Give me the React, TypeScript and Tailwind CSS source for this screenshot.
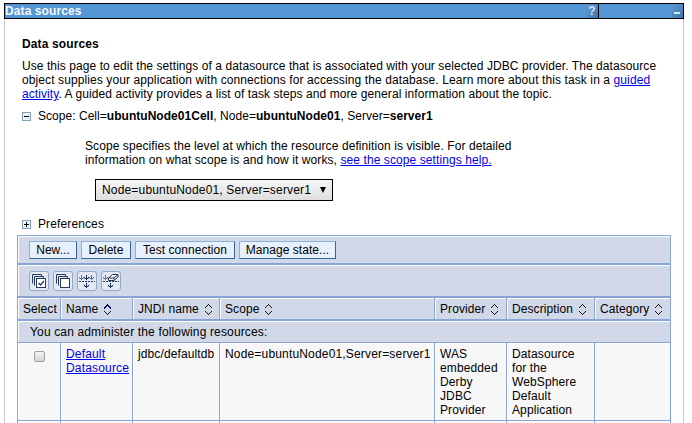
import React from "react";

const columns = [
  { name: "Name", sorted: true },
  { name: "JNDI name" },
  { name: "Scope" },
  { name: "Provider" },
  { name: "Description" },
  { name: "Category" },
];

const grid = "grid grid-cols-[43px_72px_87px_215px_72px_88px_76px]";
const cell = "border-l border-[#88a4d7]";
const inner = "border-t border-l border-white h-full";

function SortIcon({ sorted }: { sorted?: boolean }) {
  return (
    <svg width="7" height="11" viewBox="0 0 7 11" className="mt-[2px] shrink-0" fill="#111" shapeRendering="crispEdges">
      {sorted && <path d="M0 4h1v1h-1zM1 3h1v1h-1zM2 2h1v1h-1zM3 1h1v1h-1zM4 2h1v1h-1zM5 3h1v1h-1zM6 4h1v1h-1z" fill="#0000a0" />}
      <path d="M3 0h1v1h-1zM2 1h1v1h-1zM4 1h1v1h-1zM1 2h1v1h-1zM5 2h1v1h-1zM0 3h1v1h-1zM6 3h1v1h-1z" fill={sorted ? "#000040" : "#111"} />
      <path d="M0 7h1v1h-1zM6 7h1v1h-1zM1 8h1v1h-1zM5 8h1v1h-1zM2 9h1v1h-1zM4 9h1v1h-1zM3 10h1v1h-1z" />
    </svg>
  );
}

function Toggle({ open }: { open?: boolean }) {
  return (
    <svg width="9" height="9" viewBox="0 0 9 9" shapeRendering="crispEdges" className="shrink-0">
      <rect x=".5" y=".5" width="8" height="8" fill="#edf1f5" stroke="#7ea0b8" />
      <path d="M2 4.5h5" stroke="#000" />
      {!open && <path d="M4.5 2v5" stroke="#000" />}
    </svg>
  );
}

function Arrow({ x, y, color }: { x: number; y: number; color: string }) {
  return (
    <path
      transform={`translate(${x} ${y})`}
      d="M2 0h1v2h-1zM0 2h1v1h-1zM2 2h1v1h-1zM4 2h1v1h-1zM0.600 3h3.800v1h-3.800zM2 4h1v1h-1z"
      fill={color}
      stroke="none"
    />
  );
}

function Tool({ kind }: { kind: "all" | "none" | "show" | "clear" }) {
  return (
    <button className="h-5 w-5 rounded-[3px] border border-[#8fa9c9] bg-[#e4e9f4]">
      <svg width="18" height="18" viewBox="0 0 18 18" fill="none" stroke="#26395f">
        {(kind === "all" || kind === "none") && (
          <>
            <path d="M2.5 11.5v-9h9v1.5M4.5 13.5v-9h9v1.5" />
            <rect x="6.5" y="6.5" width="9" height="9" fill="#fff" />
            {kind === "all" && <path d="M8.5 11l2 2 3.5-4" strokeWidth="1.3" />}
          </>
        )}
        {(kind === "show" || kind === "clear") && (
          <>
            <path d="M1 9.5h16" strokeDasharray="2 1" />
            <Arrow x={1} y={3} color="#54759f" />
            <Arrow x={6} y={11} color="#1c2f5c" />
            {kind === "show" ? (
              <>
                <Arrow x={6} y={3} color="#1c2f5c" />
                <Arrow x={11} y={3} color="#54759f" />
              </>
            ) : (
              <path d="M6.5 6l4-3.500h5.500v2.500l-4 3.500h-5.500zM6.500 6h5.500l4-3.500M12 6v2.500" fill="#fff" />
            )}
          </>
        )}
      </svg>
    </button>
  );
}

function Action({ label, width }: { label: string; width: string }) {
  return (
    <button className={`h-[18px] border border-t-[#8db0d3] border-l-[#8db0d3] border-r-[#336699] border-b-[#336699] bg-[#e7f0ff] text-center leading-4 tracking-[0.04px] ${width}`}>
      {label}
    </button>
  );
}

export default function App() {
  return (
    <div className="h-[423px] w-[692px] overflow-hidden bg-white pt-[3px] pl-1 font-['Liberation_Sans',Arial,sans-serif] text-[12px] leading-[14px] whitespace-nowrap text-black">
      <div className="h-[420px] w-[680px]">
        <header className="flex h-4 w-[680px] border border-black bg-[#5495d5]">
          <h1 className="w-[581px] font-bold tracking-[0.1px] text-[#f4f8fc]">Data sources</h1>
          <span className="flex h-[14px] w-[12px] items-center justify-center bg-gradient-to-br from-[#5f9bd5] to-[#4078ae] text-[12px] font-bold text-[#d6e7f7]">?</span>
          <span className="h-[14px] w-px bg-black" />
          <span className="ml-[73px] flex h-[14px] w-[11px] bg-gradient-to-br from-[#5c98d1] to-[#4078ae]">
            <i className="mt-[8px] ml-[2px] h-[2px] w-[6px] bg-[#d6e7f7]" />
          </span>
        </header>
        <main className="h-[404px] border-x border-[#c8c8c8] pt-[18px] pl-3">
          <h2 className="pl-[5px] font-bold tracking-[0.12px]">Data sources</h2>
          <p className="mt-2 pl-[5px]">
            <span className="tracking-[0.068px]">Use this page to edit the settings of a datasource that is associated with your selected JDBC provider. The datasource</span><br />
            <span className="tracking-[0.102px]">object supplies your application with connections for accessing the database. Learn more about this task in a <a className="text-[#0000ee] underline">guided</a></span><br />
            <span className="tracking-[0.082px]"><a className="text-[#0000ee] underline">activity</a>. A guided activity provides a list of task steps and more general information about the topic.</span>
          </p>
          <div className="mt-2 flex items-center gap-[7px] pl-[5px]">
            <Toggle open />
            <span className="tracking-[0.035px]">Scope: Cell=<b>ubuntuNode01Cell</b>, Node=<b>ubuntuNode01</b>, Server=<b>server1</b></span>
          </div>
          <p className="mt-4 pl-[68px] tracking-[0.085px]">
            Scope specifies the level at which the resource definition is visible. For detailed<br />
            information on what scope is and how it works, <a className="text-[#0000ee] underline">see the scope settings help.</a>
          </p>
          <button className="mt-3 ml-[78px] flex h-[22px] w-[238px] items-center justify-between border border-black bg-gradient-to-b from-[#f6f6f6] to-[#dedede] pr-[6px] pl-[6px]">
            <span className="tracking-[0.17px]">Node=ubuntuNode01, Server=server1</span>
            <svg width="6" height="6" viewBox="0 0 6 6"><path d="M0 0h6L3 6z" /></svg>
          </button>
          <div className="mt-4 flex items-center gap-[7px] pl-[5px]">
            <Toggle />
            <span className="tracking-[0.12px]">Preferences</span>
          </div>
          <section className="mt-1 w-[654px] border-t border-r border-[#88a4d7] bg-[#d1d9e8]">
            <div className={`h-[27px] ${cell}`}>
              <div className={`flex gap-1 pt-1 pl-[10px] ${inner}`}>
                <Action label="New..." width="w-[48px]" />
                <Action label="Delete" width="w-[50px]" />
                <Action label="Test connection" width="w-[100px]" />
                <Action label="Manage state..." width="w-[97px]" />
              </div>
            </div>
            <div className={`h-[33px] border-t-2 ${cell}`}>
              <div className={`flex gap-1 pt-[5px] pl-[10px] ${inner}`}>
                <Tool kind="all" />
                <Tool kind="none" />
                <Tool kind="show" />
                <Tool kind="clear" />
              </div>
            </div>
            <div className={`${grid} h-[23px] border-t-2 border-[#88a4d7]`}>
              <div className={cell}><div className={`pt-[3px] pl-1 tracking-[0.08px] ${inner}`}>Select</div></div>
              {columns.map((c) => (
                <div key={c.name} className={cell}>
                  <div className={`flex gap-[6px] pt-[3px] pl-1 tracking-[0.08px] ${inner}`}>
                    <span>{c.name}</span>
                    <SortIcon sorted={c.sorted} />
                  </div>
                </div>
              ))}
            </div>
            <div className={`h-[23px] border-t-2 ${cell}`}>
              <div className={`pt-[3px] pl-[11px] tracking-[0.15px] ${inner}`}>You can administer the following resources:</div>
            </div>
            <div className={`${grid} h-[78px] border-t border-[#88a4d7] bg-[#f7f7f7] tracking-[0.12px]`}>
              <div className={cell}>
                <div className={`pt-[7px] pl-[15px] ${inner}`}>
                  <input type="checkbox" aria-label="Select Default Datasource" className="block h-[11px] w-[11px] appearance-none rounded-[2px] border border-[#a0a0a0] bg-gradient-to-b from-[#f4f4f4] to-[#d4d4d4]" />
                </div>
              </div>
              <div className={cell}><div className={`pt-[3px] pl-1 tracking-[0.17px] text-[#0000ee] underline ${inner}`}>Default<br />Datasource</div></div>
              <div className={cell}><div className={`pt-[3px] pl-1 ${inner}`}>jdbc/defaultdb</div></div>
              <div className={cell}><div className={`pt-[3px] pl-1 tracking-[0.17px] ${inner}`}>Node=ubuntuNode01,Server=server1</div></div>
              <div className={cell}><div className={`pt-[3px] pl-1 ${inner}`}>WAS<br />embedded<br />Derby<br />JDBC<br />Provider</div></div>
              <div className={cell}><div className={`pt-[3px] pl-1 ${inner}`}>Datasource<br />for the<br />WebSphere<br />Default<br />Application</div></div>
              <div className={cell}><div className={inner} /></div>
            </div>
            <div className={`${grid} h-[10px] border-t border-[#88a4d7] bg-[#f7f7f7]`}>
              {["select", ...columns.map((c) => c.name)].map((c) => (
                <div key={c} className={cell}><div className={inner} /></div>
              ))}
            </div>
          </section>
        </main>
      </div>
    </div>
  );
}
